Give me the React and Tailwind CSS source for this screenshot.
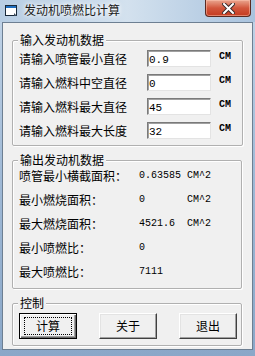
import React from 'react';

const cjk = { fontFamily: '"Noto Sans CJK SC", "Noto Sans", sans-serif' };
const mono = { fontFamily: '"Liberation Mono", "DejaVu Sans Mono", monospace' };

const inputs = [
    { label: '请输入喷管最小直径', value: '0.9' },
    { label: '请输入燃料中空直径', value: '0' },
    { label: '请输入燃料最大直径', value: '45' },
    { label: '请输入燃料最大长度', value: '32' },
];

const outputs = [
    { label: '喷管最小横截面积：', value: '0.63585', unit: 'CM^2' },
    { label: '最小燃烧面积：', value: '0', unit: 'CM^2' },
    { label: '最大燃烧面积：', value: '4521.6', unit: 'CM^2' },
    { label: '最小喷燃比：', value: '0', unit: '' },
    { label: '最大喷燃比：', value: '7111', unit: '' },
];

// group box with the caption sitting on the top border
function Group({ title, className, children }) {
    return (
        <div className={`relative ml-[9px] border border-[#b0b0b0] rounded-[2px] shadow-[inset_1px_1px_0_#ffffff,1px_1px_0_#ffffff] ${className}`}>
            <span className="absolute -top-[8px] left-[5px] bg-[#f0f0f0] px-[2px] text-[12px] leading-[14px] text-black" style={cjk}>
                {title}
            </span>
            {children}
        </div>
    );
}

function Button({ label, isDefault }) {
    return (
        <button
            className={`w-[58px] h-[26px] flex items-center justify-center bg-[#f0f0f0] text-[12px] text-black ${isDefault
                ? 'border border-[#000000] shadow-[inset_1px_1px_0_#ffffff,inset_-1px_-1px_0_#696969,inset_-2px_-2px_0_#a0a0a0]'
                : 'border border-t-[#ffffff] border-l-[#ffffff] border-b-[#404040] border-r-[#404040] shadow-[inset_-1px_-1px_0_#a0a0a0,inset_1px_1px_0_#e3e3e3]'
                }`}
            style={cjk}
        >
            {isDefault ? (
                <span className="w-[48px] h-[18px] flex items-center justify-center border border-dotted border-black">{label}</span>
            ) : (
                label
            )}
        </button>
    );
}

export default function App() {
    return (
        <div className="w-[255px] h-[356px] overflow-hidden flex flex-col bg-gradient-to-b from-[#c3d5e8] via-[#9fb9d6] to-[#8aa7c8]">
            {/* TITLE BAR */}
            <div className="h-[22px] flex items-start shrink-0 bg-gradient-to-r from-[#b7cde3] via-[#d3e1ee] to-[#a9c3de]">
                <svg width="13" height="12" viewBox="0 0 13 12" className="ml-[5px] mt-[5px]">
                    <rect x="0.5" y="0.5" width="11" height="10" fill="#ffffff" stroke="#1a2a3a" />
                    <rect x="1" y="1" width="10" height="2" fill="#1f6fc0" />
                    <path d="M9 8 L12 11 L9 11 Z" fill="#3a4a5a" />
                </svg>
                <span
                    className="ml-[6px] mt-[3px] text-[12px] leading-[14px] text-[#1b1b1b] [text-shadow:0_0_4px_#ffffff,0_0_6px_#ffffff]"
                    style={cjk}
                >
                    发动机喷燃比计算
                </span>
                <div className="ml-auto mr-[4px] w-[46px] h-[17px] rounded-b-[4px] border border-t-0 border-[#5a2a22] bg-gradient-to-b from-[#e9a58f] via-[#d2563c] to-[#c43a1f] flex items-center justify-center shadow-[inset_0_0_0_1px_rgba(255,200,180,0.5)]">
                    <svg width="13" height="11" viewBox="0 0 13 11">
                        <path d="M2 1 L11 10 M11 1 L2 10" stroke="#3b2a2a" strokeWidth="4" strokeLinecap="square" />
                        <path d="M2 1 L11 10 M11 1 L2 10" stroke="#ffffff" strokeWidth="2" strokeLinecap="square" />
                    </svg>
                </div>
            </div>

            {/* CLIENT AREA */}
            <div className="ml-[2px] w-[251px] h-[328px] border border-[#6d7f92] bg-[#f0f0f0] flex flex-col">
                <Group title="输入发动机数据" className="mt-[17px] w-[231px] h-[106px]">
                    <div className="pt-[9px] pl-[6px] flex flex-col gap-[7px]">
                        {inputs.map((row) => (
                            <div key={row.label} className="h-[17px] flex items-center">
                                <span className="w-[128px] text-[12px] leading-[14px] text-black" style={cjk}>{row.label}</span>
                                <div className="w-[64px] h-[17px] border border-t-[#7a7a7a] border-l-[#7a7a7a] border-b-[#e3e3e3] border-r-[#e3e3e3] bg-white flex items-center pl-[1px] shadow-[inset_1px_1px_0_#a0a0a0]">
                                    <span className="text-[11px] leading-[12px] text-black mt-[2px]" style={mono}>{row.value}</span>
                                </div>
                                <span className="ml-[8px] self-start mt-[1px] text-[10px] font-bold leading-[12px] text-black" style={mono}>CM</span>
                            </div>
                        ))}
                    </div>
                </Group>

                <Group title="输出发动机数据" className="mt-[14px] w-[230px] h-[129px]">
                    <div className="pt-[3px] pl-[6px] flex flex-col">
                        {outputs.map((row) => (
                            <div key={row.label} className="h-[24px] flex items-center">
                                <span className="w-[120px] text-[12px] leading-[14px] text-black" style={cjk}>{row.label}</span>
                                <span className="w-[48px] text-[10px] leading-[12px] text-black" style={mono}>{row.value}</span>
                                <span className="text-[10px] leading-[12px] text-black" style={mono}>{row.unit}</span>
                            </div>
                        ))}
                    </div>
                </Group>

                <Group title="控制" className="mt-[14px] w-[230px] h-[43px]">
                    <div className="pt-[9px] pl-[6px] flex gap-[22px]">
                        <Button label="计算" isDefault />
                        <Button label="关于" />
                        <Button label="退出" />
                    </div>
                </Group>
            </div>
        </div>
    );
}
